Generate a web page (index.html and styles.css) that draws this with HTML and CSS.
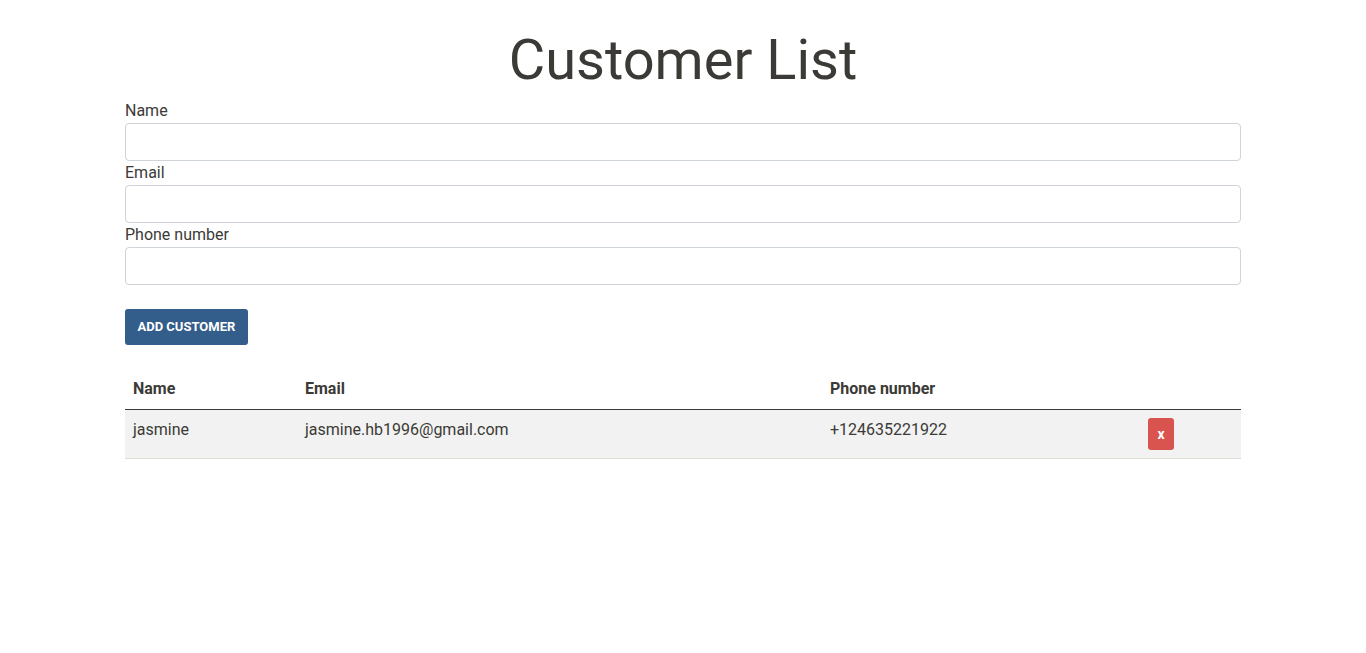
FILE: index.html
```html
<!DOCTYPE html>
<html lang="en">
<head>
<meta charset="utf-8">
<title>Customer List</title>
<link rel="stylesheet" href="styles.css">
</head>
<body>
<div class="container">
  <h1 class="title">Customer List</h1>
  <form class="form">
    <label class="label" for="name">Name</label>
    <input class="input" id="name" type="text">
    <label class="label" for="email">Email</label>
    <input class="input" id="email" type="text">
    <label class="label" for="phone">Phone number</label>
    <input class="input" id="phone" type="text">
    <button class="btn-add" type="button">ADD CUSTOMER</button>
  </form>
  <table class="table">
    <thead>
      <tr>
        <th class="col-name">Name</th>
        <th class="col-email">Email</th>
        <th class="col-phone">Phone number</th>
        <th class="col-action"></th>
      </tr>
    </thead>
    <tbody>
      <tr>
        <td>jasmine</td>
        <td>jasmine.hb1996@gmail.com</td>
        <td>+124635221922</td>
        <td><button class="btn-del" type="button">x</button></td>
      </tr>
    </tbody>
  </table>
</div>
</body>
</html>
```
FILE: styles.css
```css
* { box-sizing: border-box; }
body {
  margin: 0;
  font-family: Roboto, "Liberation Sans", sans-serif;
  font-size: 16px;
  line-height: 1.5;
  color: #3b3a36;
  background: #fff;
}
.container {
  max-width: 1140px;
  margin: 0 auto;
  padding: 0 12px;
}
.title {
  margin: 0 0 5px;
  padding-top: 27px;
  font-size: 56px;
  font-weight: 400;
  line-height: 1.2;
  text-align: center;
  color: #3b3a36;
}
.form {
  display: flex;
  flex-direction: column;
}
.label {
  display: block;
  line-height: 24px;
  height: 24px;
}
.input {
  display: block;
  width: 100%;
  height: 38px;
  border: 1px solid #ced4da;
  border-radius: 4px;
  padding: 6px 12px;
  font: inherit;
  margin: 0;
}
.btn-add {
  align-self: flex-start;
  margin-top: 24px;
  height: 36px;
  padding: 0 12.5px 2px;
  border: 0;
  border-radius: 3px;
  background: #335d8a;
  color: #fff;
  font-family: inherit;
  font-size: 13px;
  font-weight: 700;
}
.table {
  width: 100%;
  border-collapse: collapse;
  margin-top: 24px;
}
.table th {
  text-align: left;
  font-weight: 700;
  padding: 8px;
  border-bottom: 1px solid #3b3a36;
  line-height: 24px;
}
.table td {
  padding: 8px;
  background: #f2f2f2;
  border-bottom: 1px solid #e2ddd3;
  vertical-align: top;
  line-height: 24px;
}
.col-name { width: 172px; }
.col-email { width: 525px; }
.col-phone { width: 318px; }
.btn-del {
  display: block;
  width: 26px;
  height: 32px;
  border: 0;
  border-radius: 3px;
  background: #d9534f;
  color: #fff;
  font-family: inherit;
  font-size: 14px;
  font-weight: 700;
  padding: 0;
  margin: 0;
}
```
